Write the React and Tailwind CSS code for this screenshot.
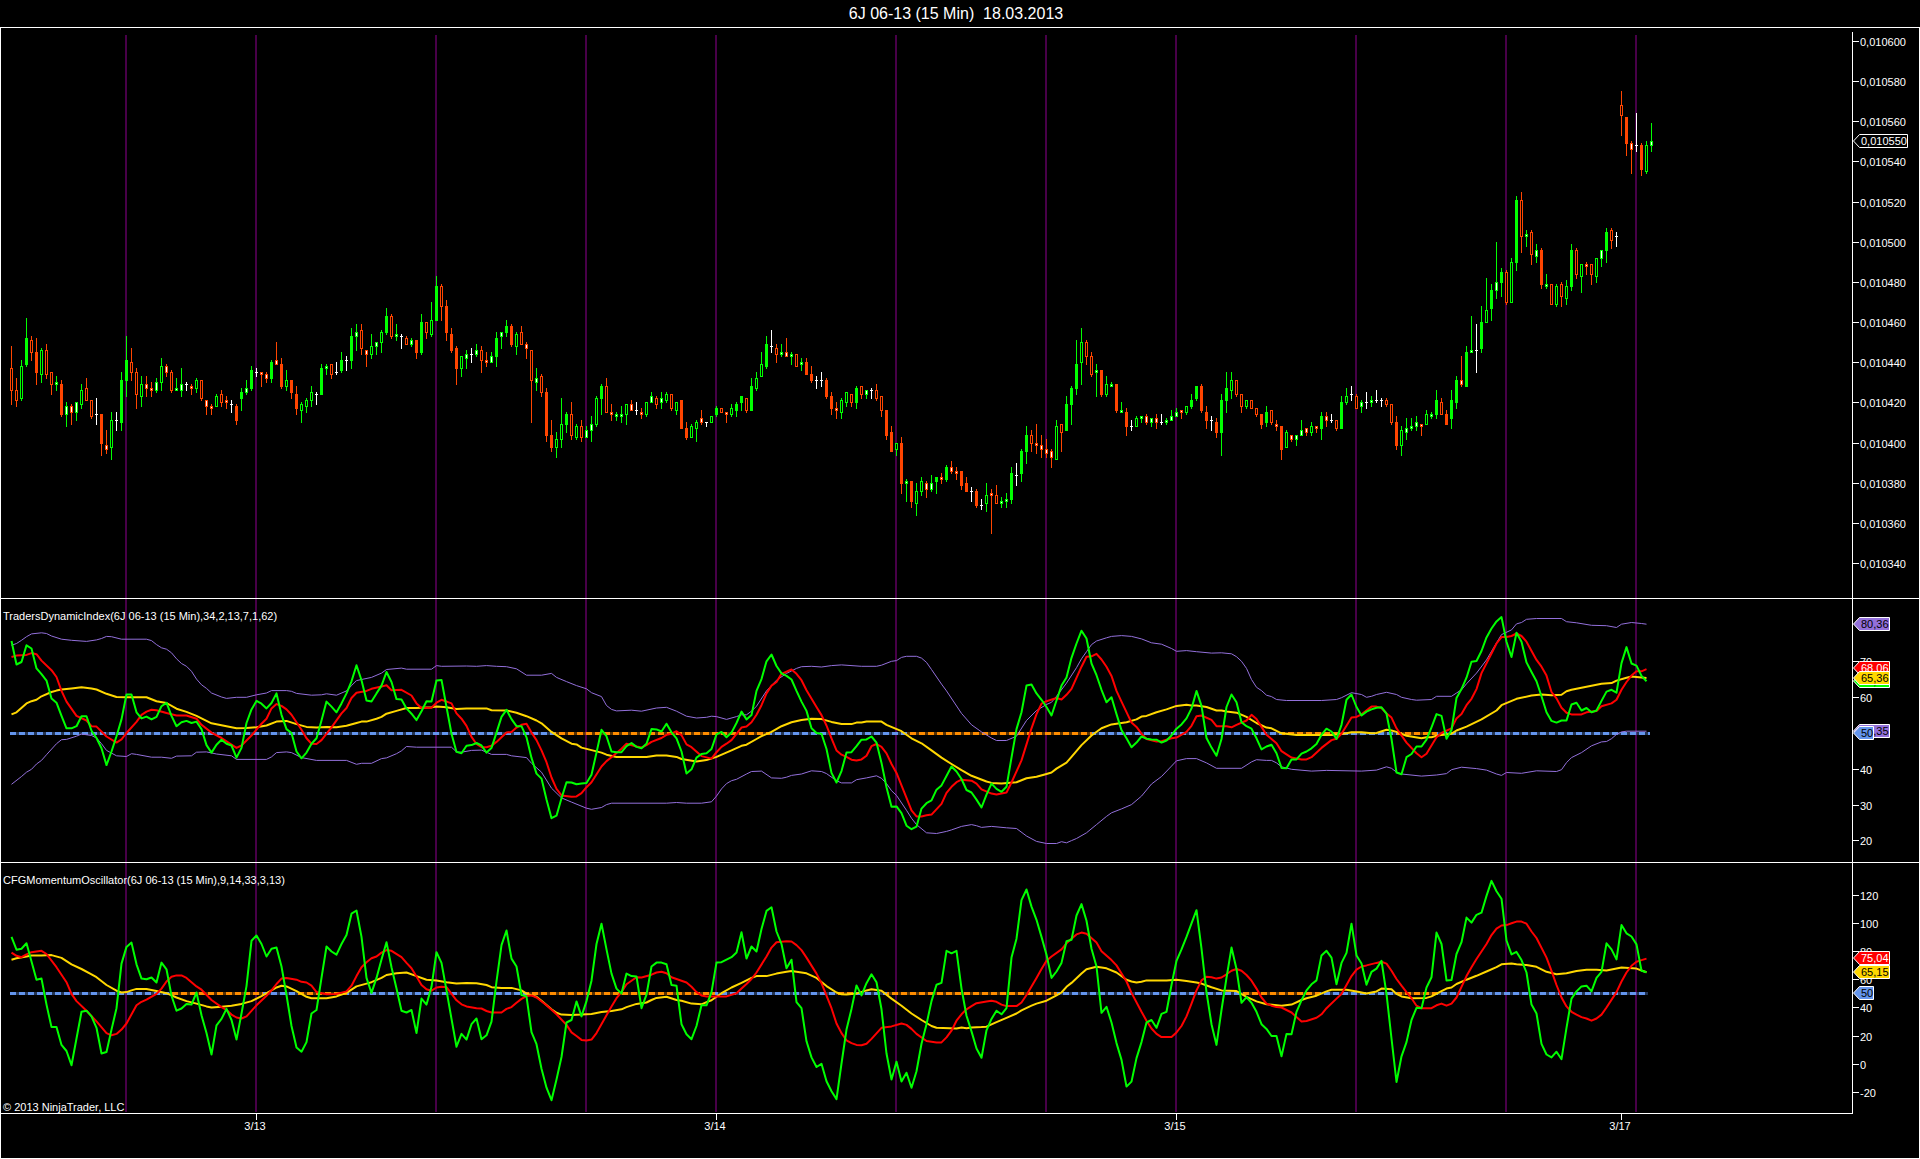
// src/App.jsx
import { useMemo } from 'react'

const BAR_STEP = 5
const FIRST_BAR_X = 11

const SESSION_LINES = [125, 255, 435, 585, 715, 895, 1045, 1175, 1355, 1505, 1635]

const DATES = [
  { label: '3/13', x: 256 },
  { label: '3/14', x: 716 },
  { label: '3/15', x: 1176 },
  { label: '3/17', x: 1621 },
]

// kind high top bottom low
// G/R solid body, g/r hollow body, w/o body with white core, d doji
const CANDLES = `
r 346 368 391 405|r 378 390 401 407|g 360 366 399 401|G 318 338 365 367|r 336 340 353 361|R 338 352 373 385|g 348 350 375 383|r 344 350 375 379|r 372 372 385 395|w 376 382 385 391
R 380 384 415 417|w 402 406 415 427|o 404 406 413 425|w 402 402 413 421|g 384 390 405 409|r 378 388 401 401|r 400 400 417 419|d 398 414 415 425|R 414 414 444 456|o 430 445 450 454
g 412 420 448 460|d 412 420 421 431|G 372 380 423 431|G 336 360 381 397|r 348 362 373 381|r 368 372 395 409|g 376 384 397 407|o 376 384 389 397|o 382 388 391 397|w 378 382 391 393
g 358 366 383 391|o 364 366 373 377|r 370 372 391 393|w 378 388 391 391|w 368 384 391 397|d 382 384 385 391|o 384 386 389 395|g 378 380 389 393|r 380 380 399 401|o 400 400 407 415
o 404 406 409 415|g 394 396 407 407|r 390 394 403 407|o 396 400 403 409|d 400 404 405 413|R 404 406 421 425|G 388 392 399 411|w 380 388 393 395|G 366 370 389 391|d 368 372 373 377
o 372 372 375 387|o 372 374 379 383|G 360 362 379 383|o 342 360 365 365|R 358 364 387 389|g 370 380 387 391|R 380 380 393 399|R 386 394 409 415|g 402 404 411 423|g 398 400 407 413
g 386 392 401 407|d 392 394 395 405|G 364 368 395 395|w 364 366 369 375|r 364 364 375 379|d 362 372 373 375|G 352 360 371 373|d 356 360 361 371|G 328 336 361 369|w 324 332 337 351
r 324 330 349 355|o 350 350 355 367|g 334 346 355 359|w 342 342 347 355|g 330 332 343 353|G 308 316 333 335|r 314 316 337 339|w 324 334 337 341|d 334 336 337 349|r 336 338 345 345
w 338 340 345 347|R 340 340 353 359|G 314 322 353 355|r 322 322 333 339|g 302 320 335 337|G 276 286 321 321|r 284 286 307 321|R 300 306 333 341|R 328 334 351 353|R 346 348 369 385
g 356 356 369 377|w 350 354 359 369|d 348 354 355 363|w 344 350 355 357|r 346 350 361 373|o 352 360 363 367|w 352 356 363 363|G 332 338 357 367|w 332 332 337 349|G 320 326 333 337
R 324 326 345 347|g 332 334 347 355|r 326 332 345 345|o 342 344 349 359|r 350 350 381 423|w 368 378 383 391|r 374 376 393 397|R 388 392 436 442|R 420 435 448 452|g 432 439 448 458
g 398 424 440 448|G 412 414 425 433|r 402 414 436 440|g 424 426 438 440|r 420 426 438 442|w 426 430 438 438|w 416 424 431 442|g 396 398 425 427|G 384 386 399 415|r 378 386 413 413
o 404 412 415 421|w 412 414 417 421|w 406 414 417 423|g 404 404 415 425|o 400 404 411 411|d 402 410 411 415|o 408 412 415 419|g 402 402 415 417|w 392 396 403 403|r 396 398 405 409
w 392 398 403 409|g 392 394 401 403|r 394 394 409 411|g 402 402 411 415|R 400 400 429 429|R 422 428 438 440|g 424 426 438 438|g 420 422 429 442|o 410 418 423 425|d 422 422 423 427
g 416 416 423 423|G 406 408 415 417|r 408 408 413 413|o 412 412 415 423|g 404 408 415 417|G 402 404 411 417|G 396 396 403 411|r 398 398 411 413|G 378 386 411 411|g 372 378 389 391
g 352 364 377 377|G 336 344 367 369|d 330 346 347 353|r 344 348 355 363|w 344 352 355 357|o 338 352 357 357|w 352 354 357 365|r 354 354 367 367|w 358 362 365 371|R 358 362 375 375
R 366 374 381 383|d 376 380 381 389|d 372 380 381 387|R 378 380 397 399|R 392 396 409 415|o 402 408 411 419|g 398 400 413 419|g 392 392 403 407|r 394 394 403 407|G 386 388 403 409
r 386 386 395 399|w 390 390 395 399|d 388 390 391 399|r 384 390 399 401|r 396 396 411 417|R 410 410 436 440|R 426 432 452 452|g 443 443 450 456|R 437 443 484 494|w 479 481 484 502
R 481 481 502 508|g 483 491 504 516|g 477 481 492 496|o 481 483 490 498|w 475 483 490 492|G 477 477 482 494|o 473 477 480 484|G 465 467 480 482|o 461 467 472 474|o 467 471 474 480
R 471 471 486 490|R 477 483 492 492|d 487 491 492 502|R 489 491 506 508|d 499 505 506 510|g 483 495 504 512|o 489 493 496 534|r 485 495 504 504|w 497 501 504 508|w 493 499 502 508
G 467 473 500 504|d 463 475 476 486|G 449 451 474 482|G 426 435 452 464|r 430 435 444 452|o 424 443 446 454|o 435 445 450 458|o 439 449 454 458|o 449 451 458 468|g 420 426 460 460
r 424 424 433 452|G 396 404 431 431|G 386 388 405 425|G 340 364 389 395|g 328 342 363 385|r 340 342 357 365|r 352 356 375 377|w 364 370 373 397|R 370 370 395 397|g 376 384 395 397
w 382 384 387 387|R 384 384 411 413|w 402 410 413 413|R 408 412 427 436|d 420 426 427 431|g 416 418 427 427|w 416 416 419 423|o 414 416 423 425|w 418 418 423 427|o 414 418 423 429
d 414 422 423 425|w 418 420 423 425|w 410 416 421 421|w 408 412 417 417|o 410 410 413 419|g 406 406 413 415|G 394 400 407 409|G 386 386 399 401|R 384 386 411 413|R 406 412 421 429
d 416 420 421 431|R 418 422 433 438|G 394 400 433 456|G 372 388 401 413|g 372 380 391 399|r 380 380 395 397|r 394 394 407 413|g 400 400 407 409|r 400 400 409 409|r 408 408 415 417
R 414 414 425 429|G 406 412 423 427|r 410 410 423 425|o 420 424 427 431|R 426 426 450 460|g 430 432 448 448|o 435 435 440 442|w 435 435 440 446|w 420 430 436 436|o 428 428 433 436
g 422 426 433 436|o 426 426 429 433|G 412 416 429 440|o 412 416 421 427|d 414 420 421 423|r 420 420 429 431|G 396 402 429 429|g 388 396 403 405|d 386 394 395 401|r 394 396 409 409
w 400 402 407 413|d 392 402 403 409|w 396 400 403 407|d 390 400 401 403|d 398 400 401 407|r 398 400 405 407|r 404 404 423 425|R 416 422 446 450|g 426 430 446 456|w 418 428 433 440
w 418 426 429 431|w 416 422 427 431|o 424 424 427 436|g 410 414 425 425|w 412 414 417 419|G 390 400 415 419|r 398 402 415 415|R 410 414 425 425|G 390 400 419 429|G 376 380 403 409
o 356 380 385 387|G 346 352 387 387|w 316 350 353 353|d 324 350 351 373|G 306 322 349 353|g 278 310 323 323|G 284 290 309 321|w 242 282 291 299|G 268 272 283 297|r 270 272 303 305
g 258 262 303 303|G 196 200 263 271|r 192 200 237 253|w 230 234 237 247|r 230 232 255 265|w 244 250 257 263|R 248 250 285 289|w 274 284 287 289|r 284 284 305 305|g 284 286 305 307
r 282 284 297 307|g 280 286 299 305|G 244 250 287 291|r 248 250 275 279|g 264 264 277 293|o 262 264 267 275|r 264 264 275 285|g 258 258 277 283|w 250 250 259 267|G 228 232 251 263
r 228 230 241 249|d 232 236 237 247|r 91 105 116 136|R 117 117 144 156|o 141 143 150 174|d 113 145 146 152|R 143 145 170 176|g 141 145 172 174|w 123 141 146 152`

const PRICE_TICKS = [
  ['0,010600', 41], ['0,010580', 81], ['0,010560', 121], ['0,010540', 161],
  ['0,010520', 202], ['0,010500', 242], ['0,010480', 282], ['0,010460', 322],
  ['0,010440', 362], ['0,010420', 402], ['0,010400', 443], ['0,010380', 483],
  ['0,010360', 523], ['0,010340', 563],
]

const TDI_TICKS = [['70', 661], ['60', 697], ['40', 769], ['30', 805], ['20', 840]]

const CFG_TICKS = [
  ['120', 895], ['100', 923], ['80', 951], ['60', 979],
  ['40', 1007], ['20', 1036], ['0', 1064], ['-20', 1092],
]

// series samples: bar index, value
const TDI = {
  green: '0 115 1 181 2 174 3 127 4 136 5 192 6 208 7 226 8 276 9 288 10 325 11 360 12 360 13 354 14 326 15 326 16 367 17 387 18 416 19 463 20 425 21 382 22 335 23 265 24 265 25 315 26 332 27 327 28 335 29 328 30 298 31 288 32 325 33 354 34 343 35 339 36 345 37 341 38 362 39 407 40 428 41 406 42 392 43 403 44 408 45 442 46 415 47 345 48 307 49 283 50 291 51 304 52 289 53 262 54 322 55 362 56 373 57 425 58 444 59 428 60 403 61 388 62 338 63 285 64 299 65 315 66 290 67 262 68 228 69 183 70 225 71 282 72 285 73 262 74 240 75 202 76 230 77 278 78 279 79 304 80 319 81 337 82 312 83 284 84 285 85 226 86 224 87 300 88 375 89 426 90 430 91 409 92 407 93 401 94 408 95 428 96 415 97 372 98 328 99 308 100 334 101 354 102 354 103 385 104 443 105 487 106 501 107 560 108 612 109 605 110 556 111 511 112 512 113 517 114 515 115 513 116 490 117 428 118 364 119 382 120 425 121 427 122 427 123 410 124 401 125 412 126 416 127 403 128 362 129 363 130 369 131 347 132 371 133 388 134 425 135 487 136 475 137 442 138 432 139 430 140 418 141 377 142 370 143 385 144 372 145 345 146 313 147 335 148 323 149 255 150 222 151 172 152 153 153 185 154 206 155 213 156 223 157 255 158 285 159 311 160 360 161 373 162 375 163 418 164 485 165 512 166 480 167 428 168 427 169 410 170 392 171 391 172 383 173 400 174 457 175 525 176 580 177 579 178 598 179 633 180 643 181 636 182 585 183 570 184 562 185 532 186 520 188 467 189 481 190 502 191 533 192 540 193 560 194 582 195 546 196 515 197 530 198 538 199 524 200 442 201 362 202 315 203 240 204 237 205 262 206 280 207 300 208 324 209 282 210 240 211 217 212 162 213 122 214 86 215 108 216 178 217 211 218 252 219 287 220 273 221 320 222 365 223 388 224 413 225 400 226 383 227 389 228 391 229 392 230 400 231 394 232 380 233 361 234 349 235 332 236 304 237 255 238 297 239 387 240 414 241 437 242 390 243 300 244 265 245 287 246 343 247 354 248 361 249 388 250 419 251 411 252 406 253 430 254 471 255 472 256 447 257 447 258 431 259 425 260 416 261 404 262 378 263 361 264 369 265 390 266 350 267 280 268 265 269 300 270 324 271 313 272 307 273 302 274 301 275 319 276 390 277 484 278 489 279 441 280 432 281 411 282 411 283 392 284 357 285 320 286 325 287 389 288 365 289 275 290 250 291 218 292 173 293 171 294 143 295 105 296 80 297 60 298 48 299 117 300 160 301 92 302 117 303 175 304 202 305 228 306 270 307 315 308 339 309 344 310 338 311 338 312 293 313 288 314 310 315 303 316 315 317 310 318 283 319 257 320 252 321 260 322 177 323 132 324 178 325 184 326 213 327 228',
  red: '0 160 1 156 3 154 4 149 5 152 6 170 8 197 9 216 10 255 11 285 13 325 15 338 16 354 17 355 19 383 21 400 22 391 23 373 25 342 26 322 27 313 28 308 29 309 31 317 33 324 35 324 37 333 38 350 40 372 42 387 44 406 45 415 46 408 48 380 50 347 51 333 52 304 53 292 54 297 55 307 56 322 58 364 59 388 60 403 61 404 62 393 64 357 66 318 67 303 68 275 69 260 71 255 72 249 74 243 75 239 76 253 78 252 80 268 81 290 82 303 84 302 85 288 86 280 88 290 89 318 90 333 91 353 92 384 93 404 94 413 95 413 96 409 97 398 99 372 100 370 101 358 102 350 103 347 104 372 105 393 106 422 107 455 108 498 109 530 110 548 112 552 113 551 114 542 115 525 116 511 118 467 119 452 120 441 122 417 123 403 125 411 126 414 127 407 128 398 130 387 131 378 132 375 133 368 134 379 135 405 136 413 138 438 140 445 141 427 142 412 143 403 144 393 146 358 147 355 148 343 149 322 150 295 151 262 152 240 153 230 154 207 156 195 157 207 158 225 159 253 161 300 162 323 163 352 164 388 165 422 166 434 167 440 168 448 169 450 170 447 171 437 172 410 173 404 174 412 175 430 176 460 177 485 178 520 180 590 181 607 182 607 183 604 184 602 186 572 187 541 188 524 189 511 190 504 192 507 193 515 194 531 196 543 197 546 199 540 200 512 202 450 203 405 204 360 205 320 206 291 207 284 209 275 210 279 211 266 212 249 214 187 215 159 216 158 217 151 218 167 219 187 220 213 221 255 222 285 224 344 225 356 226 375 227 390 229 397 230 396 232 388 233 386 235 370 236 353 237 326 238 324 240 336 241 354 243 354 244 357 245 350 247 338 248 322 249 334 250 356 251 378 252 390 253 402 254 424 256 442 258 447 259 447 260 441 262 415 264 393 265 389 266 375 267 353 268 330 269 328 270 321 272 299 273 299 274 303 275 318 276 330 277 360 279 400 281 430 282 441 283 431 285 385 286 373 288 360 289 332 290 320 291 295 292 277 293 250 294 205 296 150 297 122 298 104 299 104 300 101 301 94 302 101 303 117 305 168 306 187 307 212 308 258 309 276 310 302 311 316 312 321 314 321 315 315 317 311 318 298 320 290 321 280 322 252 323 230 324 212 325 200 326 200 327 194',
  yellow: '0 321 1 315 3 290 4 284 5 280 6 270 8 258 9 254 10 251 12 248 14 245 16 248 17 251 19 263 21 272 23 273 27 273 29 284 31 289 33 305 35 314 37 325 40 346 43 354 45 360 47 359 49 357 51 352 53 341 55 339 57 348 59 356 61 358 63 356 65 357 67 353 69 345 70 341 71 341 73 333 74 328 75 319 77 311 79 303 81 303 84 301 85 299 87 301 89 306 91 304 95 304 96 309 99 310 101 316 103 326 105 338 106 346 108 370 110 388 112 403 113 405 114 414 116 421 118 428 119 434 121 440 127 440 129 436 131 436 133 440 134 446 137 453 139 449 141 440 144 422 146 409 147 406 149 390 150 382 152 370 154 354 156 343 158 337 160 333 162 334 164 342 166 348 168 348 169 344 170 344 171 341 174 341 175 350 178 368 180 388 182 402 184 422 186 442 188 460 190 477 192 493 195 509 196 513 198 515 201 511 203 500 205 496 207 488 208 484 209 473 211 456 212 440 214 407 216 380 218 360 220 349 223 343 225 335 226 327 227 325 229 315 231 307 233 297 235 294 236 296 237 296 239 300 241 310 242 310 243 313 245 316 247 328 249 345 251 358 252 360 254 374 257 379 264 379 267 374 268 371 270 371 272 374 273 373 275 364 276 366 277 370 279 381 282 388 283 385 284 385 285 381 286 379 288 375 289 366 291 355 294 335 297 310 298 295 301 277 304 268 306 265 308 267 310 266 311 256 312 252 314 246 318 235 320 233 321 226 323 218 324 215 327 219',
  upper: '0 127 1 122 2 113 3 103 4 95 6 92 7 94 8 101 10 110 12 113 15 116 17 112 18 108 19 102 20 103 22 110 27 110 28 114 29 125 30 134 31 138 32 148 33 165 34 178 35 186 36 200 37 222 38 238 39 248 40 261 42 272 43 276 45 273 47 273 49 266 51 261 52 254 55 254 56 256 57 262 60 267 62 266 63 263 65 267 67 255 68 240 69 226 70 223 72 217 74 205 75 195 78 191 79 194 84 194 85 184 86 186 91 185 93 186 95 184 97 186 99 187 101 193 103 211 106 211 108 206 109 217 111 229 113 240 115 249 116 260 118 271 119 296 120 307 121 311 124 309 126 312 129 303 131 301 133 312 135 326 137 331 139 329 140 326 141 327 143 335 145 327 146 322 147 322 148 312 149 298 151 255 153 225 155 206 157 192 158 187 160 186 162 188 164 184 166 182 170 186 173 186 174 183 176 172 177 170 178 161 179 158 181 158 182 163 183 175 184 195 186 236 187 255 190 318 192 350 194 370 196 387 197 394 199 394 201 382 203 338 205 310 207 293 208 287 209 270 211 233 213 190 214 165 215 145 216 125 217 115 219 106 220 102 222 100 224 102 226 109 228 120 230 124 232 136 233 144 235 142 237 145 240 149 242 148 244 151 245 159 246 172 247 192 248 223 249 245 250 254 251 267 252 271 253 279 255 282 262 282 265 279 266 274 268 260 270 265 271 273 272 270 273 265 275 259 277 265 278 273 280 279 281 281 284 279 285 270 288 270 289 261 290 252 291 235 293 205 295 168 297 120 298 97 300 84 301 67 302 63 303 54 305 52 310 52 311 61 313 64 316 71 319 72 321 77 322 68 324 63 326 66 327 68',
  lower: '0 517 2 495 3 483 4 475 5 460 6 450 7 434 9 403 10 392 11 391 13 382 14 376 16 380 17 387 18 403 19 422 21 437 23 439 24 431 25 433 28 441 30 441 32 444 33 438 36 437 37 427 39 426 41 432 44 437 45 447 51 447 52 440 53 428 55 426 56 428 58 442 61 450 67 450 69 461 70 458 72 458 74 445 75 443 77 431 78 423 79 411 81 413 88 413 89 426 90 427 92 422 94 421 96 433 99 433 100 437 103 442 104 458 106 483 108 528 110 555 112 567 115 584 116 587 118 582 119 574 120 570 131 570 133 568 135 570 138 570 140 566 141 550 142 530 143 515 144 507 145 503 147 488 148 481 150 480 152 499 154 500 155 497 156 492 158 488 160 479 162 481 163 487 165 507 166 513 168 513 169 504 171 499 173 493 174 500 175 515 176 535 177 548 179 590 180 612 181 630 183 653 185 655 187 649 188 645 190 635 192 630 193 633 194 638 196 635 199 639 201 641 203 662 205 677 207 683 209 683 210 678 211 681 212 675 213 669 215 653 217 630 219 607 220 597 222 586 224 574 226 550 228 516 230 495 232 466 233 451 235 445 237 445 239 457 241 472 246 472 248 454 249 448 251 450 252 450 253 457 254 468 256 475 260 480 263 478 270 480 273 477 275 468 276 472 277 483 278 488 282 494 285 491 287 487 288 476 290 469 293 473 295 477 297 488 298 492 299 484 302 486 305 479 309 481 310 476 311 456 312 442 314 428 316 409 318 398 319 397 320 389 321 377 322 370 323 368 327 368',
}

const CFG = {
  green: '0 945 1 981 2 978 3 963 4 1014 5 1065 6 1062 7 1135 8 1198 9 1198 10 1248 11 1265 12 1305 13 1230 14 1155 15 1152 16 1168 17 1200 18 1272 19 1268 20 1205 21 1145 22 1020 23 973 24 961 25 1022 26 1062 27 1064 28 1059 29 1073 30 1017 31 1036 32 1110 33 1152 34 1146 35 1133 36 1135 37 1101 38 1165 39 1215 40 1275 41 1193 42 1175 43 1147 44 1178 45 1233 46 1160 47 1083 48 956 49 941 50 965 51 1000 52 978 53 975 54 1028 55 1108 56 1195 57 1255 58 1267 59 1240 60 1160 61 1150 62 1060 63 972 64 986 65 995 66 965 67 940 68 880 69 871 70 945 71 1060 72 1102 73 1060 74 1008 75 960 76 1030 77 1090 78 1152 79 1157 80 1150 81 1215 82 1118 83 1135 84 1085 85 988 86 1018 87 1095 88 1175 89 1253 90 1217 91 1233 92 1190 93 1174 94 1232 95 1221 96 1183 97 1070 98 968 99 927 100 1006 101 1028 102 1108 103 1112 104 1212 105 1246 106 1315 107 1368 108 1403 109 1345 110 1282 111 1185 112 1178 113 1126 114 1168 115 1125 116 1068 117 965 118 908 119 980 120 1048 121 1090 122 1104 123 1048 124 1055 125 1056 126 1145 127 1107 128 1028 129 1017 130 1017 131 1022 132 1080 133 1082 134 1190 135 1218 136 1232 137 1195 138 1137 139 1137 140 1100 141 1017 142 1016 143 1009 144 1002 145 989 146 932 147 1006 148 972 149 986 150 923 151 872 152 862 153 930 154 965 155 1033 156 1009 157 1128 158 1145 159 1238 160 1283 161 1310 162 1301 163 1350 164 1378 165 1400 166 1300 167 1205 168 1147 169 1081 170 1109 171 1075 172 1050 173 1072 174 1148 175 1272 176 1345 177 1295 178 1351 179 1326 180 1368 181 1322 182 1245 183 1190 184 1125 185 1079 186 1074 187 984 188 991 189 984 190 1090 191 1166 192 1210 193 1258 194 1284 195 1207 196 1175 197 1152 198 1162 199 1145 200 1003 201 950 202 842 203 812 204 860 205 897 206 945 207 995 208 1060 209 1042 210 1018 211 957 212 953 213 885 214 853 215 900 216 978 217 1028 218 1158 219 1141 220 1185 221 1243 222 1290 223 1365 224 1351 225 1285 226 1240 227 1185 228 1178 229 1200 230 1161 231 1155 232 1080 233 1012 234 980 235 945 236 907 237 870 238 978 239 1100 240 1190 241 1248 242 1150 243 1060 244 975 245 1035 246 1130 247 1114 248 1130 249 1155 250 1190 251 1203 252 1223 253 1223 254 1280 255 1217 256 1218 257 1155 258 1123 259 1095 260 1078 261 1067 262 997 263 984 264 1003 265 1078 266 1018 267 990 268 908 269 997 270 1020 271 1079 272 1043 273 1034 274 1012 275 1105 276 1230 277 1352 278 1280 279 1240 280 1178 281 1144 282 1145 283 1087 284 1058 285 933 286 965 287 1067 288 1066 289 993 290 960 291 891 292 905 293 883 294 877 295 830 296 788 297 817 298 838 299 955 300 994 301 987 302 1010 303 1045 304 1135 305 1160 306 1245 307 1275 308 1283 309 1267 310 1288 311 1200 312 1118 313 1098 314 1084 315 1082 316 1098 317 1060 318 1043 319 963 320 980 321 1008 322 912 323 935 324 944 325 966 326 1040 327 1044',
  red: '0 989 1 998 2 1002 3 994 4 988 6 984 7 993 9 1030 11 1072 12 1105 13 1125 15 1152 17 1182 19 1215 20 1221 21 1217 22 1205 23 1188 25 1137 26 1127 27 1121 29 1105 30 1090 31 1070 32 1057 33 1053 34 1053 35 1060 37 1084 38 1093 40 1122 42 1142 43 1150 44 1163 45 1171 46 1174 47 1168 49 1137 51 1110 52 1095 53 1077 54 1062 55 1060 57 1065 58 1071 59 1073 60 1082 61 1100 63 1106 65 1105 67 1098 68 1082 69 1055 70 1030 71 1016 72 1005 73 1000 74 989 75 982 76 984 78 1002 79 1018 80 1033 81 1056 82 1080 83 1092 84 1096 85 1087 86 1085 87 1086 89 1123 90 1134 91 1140 93 1145 94 1146 95 1153 96 1157 98 1157 99 1147 100 1142 101 1130 102 1119 103 1111 104 1109 105 1115 107 1137 109 1162 111 1192 112 1213 113 1223 114 1234 115 1236 116 1233 117 1215 119 1165 120 1140 121 1117 122 1100 123 1078 125 1058 126 1059 128 1051 129 1045 130 1043 131 1047 132 1058 133 1063 134 1068 135 1073 136 1085 137 1100 138 1109 139 1112 143 1112 145 1103 146 1090 147 1077 148 1063 149 1045 151 1000 152 975 153 960 155 957 156 958 157 968 158 982 159 1003 161 1048 162 1075 163 1110 164 1145 165 1188 166 1215 167 1235 168 1243 169 1248 170 1249 171 1245 172 1231 174 1200 176 1196 178 1188 179 1192 180 1203 181 1217 183 1237 185 1241 186 1241 187 1227 188 1208 189 1180 190 1162 191 1148 192 1139 193 1131 195 1126 196 1124 197 1127 198 1135 199 1139 201 1139 202 1129 203 1108 205 1060 206 1035 207 1012 208 1000 210 980 211 963 212 950 213 938 214 933 215 936 217 961 218 985 220 1010 221 1025 223 1070 224 1102 226 1155 227 1180 228 1202 229 1217 230 1226 232 1226 233 1213 234 1195 235 1168 236 1132 237 1095 238 1067 239 1057 240 1058 241 1062 242 1059 243 1050 244 1040 245 1035 246 1040 247 1052 248 1068 249 1090 250 1115 251 1132 252 1138 253 1142 254 1143 256 1157 257 1170 258 1182 259 1181 261 1172 262 1162 263 1145 265 1118 266 1105 267 1080 268 1055 269 1037 270 1028 271 1025 273 1018 274 1015 275 1020 276 1040 277 1063 278 1082 279 1100 280 1117 281 1138 282 1145 284 1145 285 1137 286 1132 287 1138 288 1132 289 1115 290 1085 291 1055 292 1030 293 1007 295 965 296 940 297 922 298 913 299 912 300 907 301 902 302 902 303 908 304 930 305 948 307 1003 308 1040 309 1080 310 1115 311 1140 312 1155 313 1163 314 1170 315 1174 316 1180 317 1174 318 1163 319 1143 321 1100 322 1070 323 1045 324 1026 325 1015 326 1010 327 1006',
  yellow: '0 1009 1 1005 3 1000 4 997 6 997 8 996 10 1004 12 1022 14 1035 16 1050 17 1058 19 1080 21 1096 22 1101 23 1100 24 1095 25 1091 27 1091 28 1094 29 1097 31 1103 33 1115 35 1125 37 1132 39 1140 40 1143 42 1141 44 1138 46 1133 48 1125 50 1111 52 1095 53 1087 54 1082 55 1084 57 1097 59 1113 60 1117 63 1117 65 1112 67 1102 69 1084 71 1076 72 1072 74 1060 75 1052 77 1047 79 1045 81 1055 83 1065 85 1067 87 1072 89 1076 91 1074 93 1075 95 1080 96 1086 98 1088 100 1088 102 1095 103 1104 105 1113 106 1124 108 1148 109 1158 110 1163 112 1164 114 1163 116 1161 118 1156 120 1153 122 1148 123 1142 125 1133 127 1129 128 1122 129 1116 131 1113 133 1122 134 1124 136 1132 138 1134 139 1128 140 1123 142 1103 144 1087 146 1074 148 1060 149 1055 151 1055 153 1048 155 1043 156 1041 159 1047 161 1060 163 1083 165 1101 166 1106 167 1107 169 1104 171 1095 172 1092 174 1096 176 1118 178 1138 180 1160 182 1178 184 1195 185 1200 189 1202 190 1199 191 1201 192 1199 194 1198 195 1197 197 1184 199 1172 201 1160 202 1151 204 1138 205 1132 207 1124 209 1109 210 1101 211 1085 212 1074 214 1048 215 1036 217 1029 219 1033 221 1045 223 1065 224 1070 225 1073 226 1071 227 1067 231 1067 233 1065 235 1069 237 1073 238 1076 240 1086 242 1095 245 1097 247 1113 249 1126 251 1134 254 1138 256 1135 258 1122 259 1117 261 1110 263 1098 264 1093 267 1093 269 1098 271 1104 273 1098 274 1090 276 1092 277 1105 278 1112 280 1117 283 1116 284 1112 286 1097 287 1090 288 1087 289 1077 291 1065 293 1054 295 1042 297 1030 298 1022 300 1020 301 1022 303 1024 305 1029 307 1043 309 1050 311 1047 313 1041 315 1037 317 1037 319 1039 321 1034 322 1031 325 1034 327 1044',
}

const BLUE = '#6495ed'
const ORANGE = '#ff8c00'

const TDI_MID = [[10, 555, BLUE], [555, 770, ORANGE], [770, 907, BLUE], [907, 1092, ORANGE], [1092, 1282, BLUE], [1282, 1342, ORANGE], [1342, 1397, BLUE], [1397, 1437, ORANGE], [1437, 1650, BLUE]]
const CFG_MID = [[10, 172, BLUE], [172, 263, ORANGE], [263, 298, BLUE], [298, 347, ORANGE], [347, 527, BLUE], [527, 715, ORANGE], [715, 837, BLUE], [837, 853, ORANGE], [853, 887, BLUE], [887, 1057, ORANGE], [1057, 1243, BLUE], [1243, 1320, ORANGE], [1320, 1397, BLUE], [1397, 1437, ORANGE], [1437, 1648, BLUE]]

function barX(i) {
  return FIRST_BAR_X + i * BAR_STEP
}

function toPoints(data) {
  const n = data.split(' ').map(Number)
  const pts = []
  for (let i = 0; i < n.length; i += 2) {
    pts.push(`${barX(n[i]) + 0.5},${(600 + n[i + 1] * 0.3565).toFixed(1)}`)
  }
  return pts.join(' ')
}

function Series({ data, color, width = 2 }) {
  const points = useMemo(() => toPoints(data), [data])
  return <polyline points={points} fill="none" stroke={color} strokeWidth={width} strokeLinejoin="round" />
}

function Candle({ kind, high, top, bottom, low, x }) {
  const color = kind === 'd' ? '#ffffff' : 'Ggw'.includes(kind) ? '#00ff00' : '#ff4500'
  const core = 'gr'.includes(kind) ? '#000000' : 'wo'.includes(kind) ? '#ffffff' : null
  return (
    <g shapeRendering="crispEdges">
      <rect x={x} y={high} width="1" height={low - high} fill={color} />
      <rect x={x - 1} y={top} width="3" height={bottom - top} fill={color} />
      {core && <rect x={x} y={top + 1} width="1" height={Math.max(bottom - top - 2, 1)} fill={core} />}
    </g>
  )
}

function SessionLines({ from, to }) {
  return SESSION_LINES.map(x => (
    <rect key={x} x={x} y={from} width="2" height={to - from} fill="#480048" shapeRendering="crispEdges" />
  ))
}

function Axis({ from, to, ticks }) {
  return (
    <g>
      <rect x="1852" y={from} width="1" height={to - from} fill="#fff" shapeRendering="crispEdges" />
      {ticks.map(([label, y]) => (
        <g key={label}>
          <rect x="1853" y={y} width="6" height="1" fill="#fff" shapeRendering="crispEdges" />
          <text x="1860" y={y + 5} fill="#fff" fontSize="11">{label}</text>
        </g>
      ))}
    </g>
  )
}

function Tag({ y, label, fill, color = '#000', width = 30 }) {
  return (
    <g>
      <path d={`M1853.5 ${y + 1}L1859.5 ${y - 5.5}H${1859.5 + width}V${y + 7.5}H1859.5Z`} fill={fill} stroke="#fff" />
      <text x="1861" y={y + 5} fill={color} fontSize="11">{label}</text>
    </g>
  )
}

function MidLine({ y, segments }) {
  return segments.map(([from, to, color]) => (
    <g key={from} stroke={color} strokeWidth="3">
      <line x1={from} x2={to} y1={y} y2={y} opacity="0.35" />
      <line x1={from} x2={to} y1={y} y2={y} strokeDasharray="6 3" strokeDashoffset={(from - 10) % 9} />
    </g>
  ))
}

function PricePanel() {
  const candles = useMemo(
    () => CANDLES.trim().split(/[|\n]/).map(row => {
      const [kind, ...v] = row.split(' ')
      const [high, top, bottom, low] = v.map(Number)
      return { kind, high, top, bottom, low }
    }),
    []
  )
  return (
    <section className="border-b border-white">
      <svg viewBox="1 28 1918 570" className="block w-full" role="img" aria-label="6J 06-13">
        <SessionLines from={35} to={598} />
        {candles.map((c, i) => <Candle key={i} x={barX(i)} {...c} />)}
        <Axis from={32} to={598} ticks={PRICE_TICKS} />
        <Tag y={140} label="0,010550" fill="#000" color="#fff" width={48} />
      </svg>
    </section>
  )
}

function TdiPanel() {
  return (
    <section className="relative border-b border-white">
      <svg viewBox="1 599 1918 263" className="block w-full" role="img" aria-label="TradersDynamicIndex">
        <SessionLines from={599} to={862} />
        <MidLine y={733.5} segments={TDI_MID} />
        <Series data={TDI.upper} color="#9370db" width={1} />
        <Series data={TDI.lower} color="#9370db" width={1} />
        <Series data={TDI.yellow} color="#ffd700" />
        <Series data={TDI.red} color="#ff0000" />
        <Series data={TDI.green} color="#00ff00" />
        <Axis from={599} to={862} ticks={TDI_TICKS} />
        <Tag y={623} label="80,36" fill="#9370db" />
        <Tag y={667} label="68,06" fill="#ff0000" color="#fff" />
        <Tag y={680} label="64,77" fill="#00ff00" />
        <Tag y={677} label="65,36" fill="#ffd700" />
        <Tag y={730} label="50,35" fill="#9370db" />
        <Tag y={732} label="50" fill={BLUE} width={14} />
      </svg>
      <h2 className="absolute left-0.5 top-[9px] text-[11px] leading-4">
        TradersDynamicIndex(6J 06-13 (15 Min),34,2,13,7,1,62)
      </h2>
    </section>
  )
}

function CfgPanel() {
  return (
    <section className="relative">
      <svg viewBox="1 863 1918 250" className="block w-full" role="img" aria-label="CFGMomentumOscillator">
        <SessionLines from={863} to={1112} />
        <MidLine y={993.5} segments={CFG_MID} />
        <Series data={CFG.yellow} color="#ffd700" />
        <Series data={CFG.red} color="#ff0000" />
        <Series data={CFG.green} color="#00ff00" />
        <Axis from={863} to={1113} ticks={CFG_TICKS} />
        <Tag y={957} label="75,04" fill="#ff0000" color="#fff" />
        <Tag y={971} label="65,15" fill="#ffd700" />
        <Tag y={992} label="50" fill={BLUE} width={14} />
      </svg>
      <h2 className="absolute left-0.5 top-[9px] text-[11px] leading-4">
        CFGMomentumOscillator(6J 06-13 (15 Min),9,14,33,3,13)
      </h2>
      <p className="absolute bottom-0 left-0.5 text-[11px] leading-3">© 2013 NinjaTrader, LLC</p>
    </section>
  )
}

function TimeAxis() {
  return (
    <svg viewBox="1 1113 1918 45" className="block w-full" role="img" aria-label="Dates">
      <rect x="1" y="1113" width="1852" height="1" fill="#fff" shapeRendering="crispEdges" />
      {DATES.map(({ label, x }) => (
        <g key={label}>
          <rect x={x} y="1113" width="1" height="7" fill="#fff" shapeRendering="crispEdges" />
          <text x={x - 1} y="1130" fill="#fff" fontSize="11" textAnchor="middle">{label}</text>
        </g>
      ))}
    </svg>
  )
}

export default function App() {
  return (
    <main className="flex min-h-screen flex-col bg-black font-['Liberation_Sans',Arial,sans-serif] text-white">
      <h1 className="h-[27px] pt-0.5 pr-2 text-center text-base leading-6 whitespace-pre">6J 06-13 (15 Min)  18.03.2013</h1>
      <div className="flex-1 border border-white">
        <PricePanel />
        <TdiPanel />
        <CfgPanel />
        <TimeAxis />
      </div>
    </main>
  )
}
